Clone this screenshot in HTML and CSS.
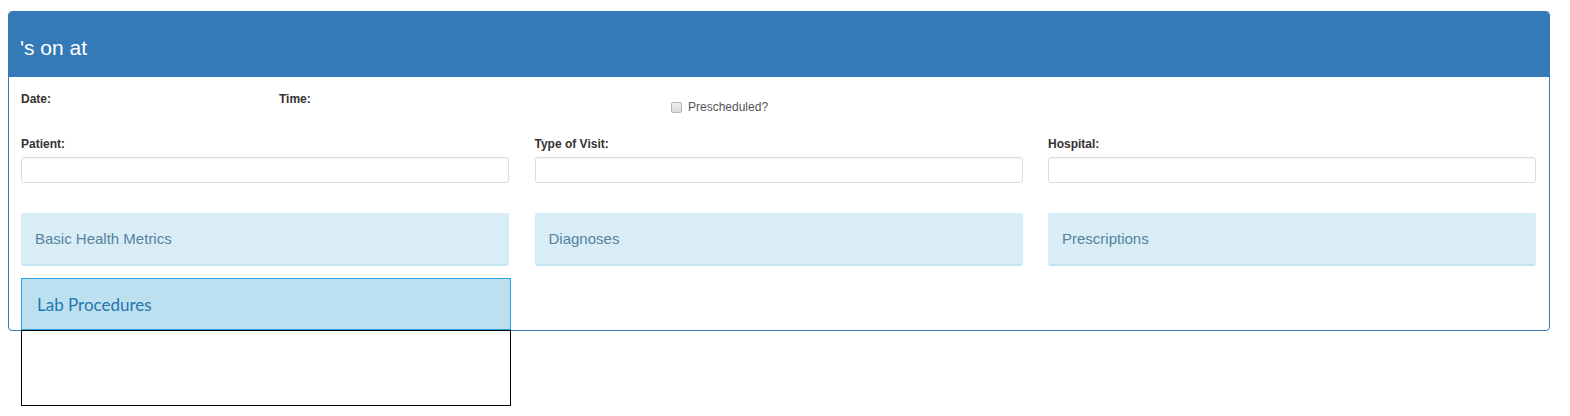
FILE: index.html
```html
<!DOCTYPE html>
<html lang="en">
<head>
<meta charset="utf-8">
<title>Office Visit</title>
<link rel="stylesheet" href="styles.css">
</head>
<body>
<div class="panel">
  <div class="panel-heading">
    <h3 class="panel-title">'s on at</h3>
  </div>
  <div class="panel-body">
    <div class="row-top">
      <label class="field-label">Date:</label>
      <label class="field-label">Time:</label>
      <label class="check">
        <input type="checkbox" class="check-box">
        <span class="check-text">Prescheduled?</span>
      </label>
    </div>
    <div class="grid row-inputs">
      <div class="field">
        <label class="field-label">Patient:</label>
        <input type="text" class="text-input">
      </div>
      <div class="field">
        <label class="field-label">Type of Visit:</label>
        <input type="text" class="text-input">
      </div>
      <div class="field">
        <label class="field-label">Hospital:</label>
        <input type="text" class="text-input">
      </div>
    </div>
    <div class="grid row-sections">
      <div class="info-box">Basic Health Metrics</div>
      <div class="info-box">Diagnoses</div>
      <div class="info-box">Prescriptions</div>
    </div>
    <div class="lab">
      <div class="lab-head">Lab Procedures</div>
      <div class="lab-body"></div>
    </div>
  </div>
</div>
</body>
</html>
```

FILE: styles.css
```css
html, body {
  background: #ffffff;
}

body {
  margin: 8px;
  min-height: 400px;
  font-family: "Liberation Sans", Arial, sans-serif;
  color: #333333;
}

.panel {
  margin: 3px 12px 0 0;
  border: 1px solid #337ab7;
  border-radius: 4px;
  background: #ffffff;
}

.panel-heading {
  background: #337ab7;
  border-radius: 3px 3px 0 0;
  padding: 25px 12px 18px 11px;
}

.panel-title {
  margin: 0;
  font-size: 21px;
  line-height: 22px;
  font-weight: normal;
  color: #ffffff;
}

.panel-body {
  box-sizing: border-box;
  height: 253px;
  padding: 14px 13px 0 12px;
}

.field-label {
  display: block;
  font-size: 12px;
  line-height: 16px;
  font-weight: bold;
  color: #333333;
}

.row-top {
  display: grid;
  grid-template-columns: 258px 392px auto;
  align-items: start;
}

.check {
  display: flex;
  align-items: center;
  margin-top: 8px;
  font-size: 12px;
  line-height: 16px;
  color: #555555;
}

.check-box {
  appearance: none;
  -webkit-appearance: none;
  box-sizing: border-box;
  width: 11px;
  height: 11px;
  margin: 0 6px 0 0;
  border: 1px solid #b5b5b5;
  border-radius: 2px;
  background: linear-gradient(#f0f0f0, #dcdcdc);
}

.grid {
  display: grid;
  grid-template-columns: repeat(3, 1fr);
  column-gap: 25.5px;
}

.row-inputs {
  margin-top: 21px;
}

.text-input {
  display: block;
  box-sizing: border-box;
  width: 100%;
  height: 26px;
  margin: 5px 0 0;
  border: 1px solid #dcdcdc;
  border-radius: 3px;
  background: #ffffff;
  box-shadow: inset 0 1px 1px rgba(0, 0, 0, 0.04);
}

.row-sections {
  margin-top: 30px;
}

.info-box {
  border: 1px solid #d5ebf6;
  border-bottom: 2px solid #c4e4f2;
  border-radius: 3px;
  background: #d9edf7;
  padding: 16px 13px 17px;
  font-size: 15px;
  line-height: 17px;
  color: #55829f;
}

.lab {
  width: 490px;
  margin-top: 12px;
}

.lab-head {
  border: 1px solid #29a3e0;
  background: #bde0f0;
  padding: 16px 15px 14px;
  font-family: Lato, "Open Sans", sans-serif;
  font-size: 17px;
  line-height: 20px;
  color: #1f77ad;
}

.lab-body {
  box-sizing: border-box;
  height: 76px;
  border: 1px solid #000000;
  background: #ffffff;
}
```
